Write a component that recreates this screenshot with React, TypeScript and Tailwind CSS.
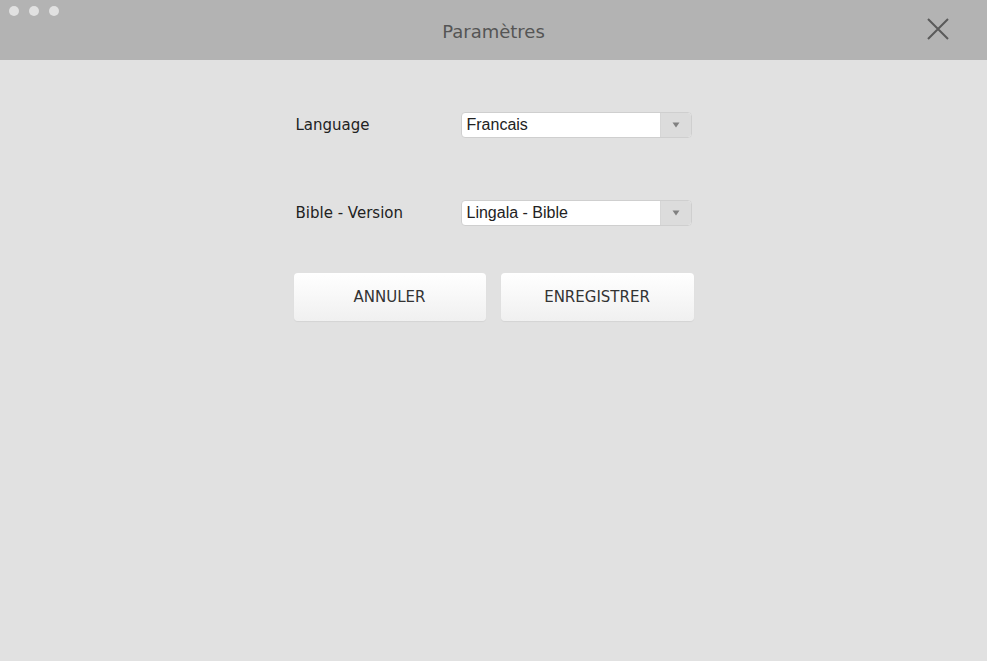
const SelectBox = ({ value }: { value: string }) => {
  return (
    <div className="flex h-[26px] w-[231px] overflow-hidden rounded-[4px] border border-[#cfcfcf] bg-white">
      <div className="flex flex-1 items-center pl-[5px] text-[16px] text-[#222]" style={{ fontFamily: '"Liberation Sans", Arial, sans-serif' }}>
        {value}
      </div>
      <div className="flex w-[31px] items-center justify-center border-l border-[#d6d6d6] bg-[#dcdcdc]">
        <svg width="8" height="6" viewBox="0 0 8 6">
          <path d="M0.5 0.5 L7.5 0.5 L4 5.5 Z" fill="#808080" />
        </svg>
      </div>
    </div>
  );
};

const FormRow = ({ label, value }: { label: string; value: string }) => {
  return (
    <div className="flex items-center">
      <div className="w-[167px] pl-[2px] text-[15px] text-[#222]">{label}</div>
      <SelectBox value={value} />
    </div>
  );
};

const App = () => {
  return (
    <div className="flex h-[661px] w-[987px] flex-col bg-[#e1e1e1]" style={{ fontFamily: '"DejaVu Sans", "Noto Sans", sans-serif' }}>
      <div className="relative flex h-[60px] items-center justify-center bg-[#b3b3b3]">
        <div className="absolute left-[9px] top-[6px] flex gap-[10px]">
          <span className="h-[10px] w-[10px] rounded-full bg-[#e1e1e1]" />
          <span className="h-[10px] w-[10px] rounded-full bg-[#e1e1e1]" />
          <span className="h-[10px] w-[10px] rounded-full bg-[#e1e1e1]" />
        </div>
        <h1 className="mt-[2px] text-[18px] text-[#555]">Paramètres</h1>
        <button className="absolute right-[37px] top-[17px] text-[#555]">
          <svg width="24" height="24" viewBox="0 0 24 24">
            <path d="M2 2 L22 22 M22 2 L2 22" stroke="#5a5a5a" strokeWidth="2" />
          </svg>
        </button>
      </div>

      <div className="mx-auto mt-[52px] flex w-[400px] flex-col">
        <FormRow label="Language" value="Francais" />
        <div className="mt-[62px]">
          <FormRow label="Bible - Version" value="Lingala - Bible" />
        </div>
        <div className="mt-[47px] flex gap-[15px]">
          <button className="h-[48px] w-[192px] rounded-[4px] bg-gradient-to-b from-white to-[#f0f0f0] text-[15px] text-[#333] shadow-[0_1px_1px_rgba(0,0,0,0.06)]">
            ANNULER
          </button>
          <button className="h-[48px] w-[193px] rounded-[4px] bg-gradient-to-b from-white to-[#f0f0f0] text-[15px] text-[#333] shadow-[0_1px_1px_rgba(0,0,0,0.06)]">
            ENREGISTRER
          </button>
        </div>
      </div>
    </div>
  );
};

export default App;
